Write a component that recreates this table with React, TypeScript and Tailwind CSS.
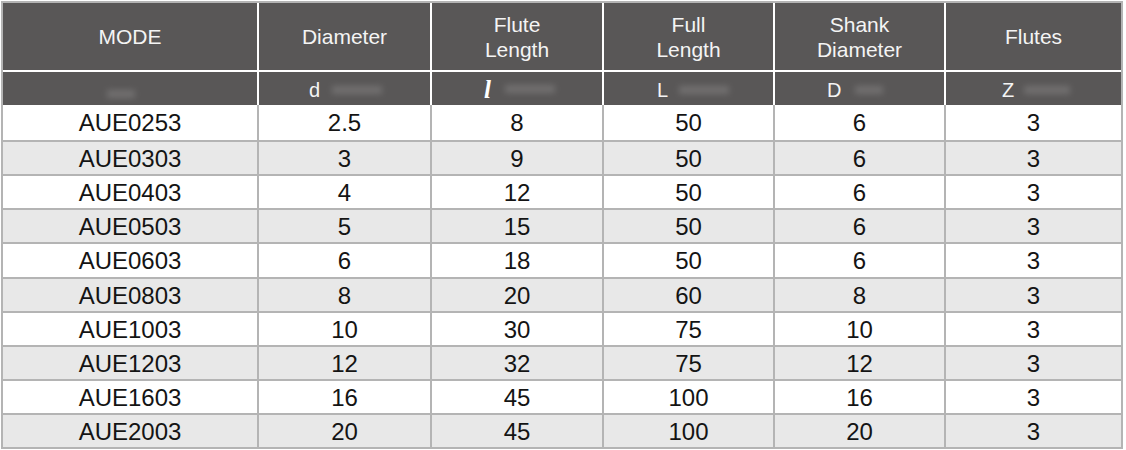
import React from 'react';

const cols = 'grid grid-cols-[254px_171px_170px_169px_169px_175px] gap-[2px]';

const rows: [string, string, string, string, string, string][] = [
    ['AUE0253', '2.5', '8', '50', '6', '3'],
    ['AUE0303', '3', '9', '50', '6', '3'],
    ['AUE0403', '4', '12', '50', '6', '3'],
    ['AUE0503', '5', '15', '50', '6', '3'],
    ['AUE0603', '6', '18', '50', '6', '3'],
    ['AUE0803', '8', '20', '60', '8', '3'],
    ['AUE1003', '10', '30', '75', '10', '3'],
    ['AUE1203', '12', '32', '75', '12', '3'],
    ['AUE1603', '16', '45', '100', '16', '3'],
    ['AUE2003', '20', '45', '100', '20', '3'],
];

// blurred label after each symbol, as in the source image
const Smudge = ({ className }: { className: string }) => (
    <span className={`inline-block h-[8px] bg-[#838181] blur-[3px] opacity-60 ${className}`} />
);

const rowHeight = (i: number) => (i === 0 ? 'h-[35px]' : i === 4 ? 'h-[33px]' : 'h-[32px]');

export default function App() {
    return (
        <div className="w-[1126px] h-[450px] bg-white pt-[1px] pl-[1px]" style={{ fontFamily: '"Liberation Sans", Arial, sans-serif' }}>
            <div className="w-[1122px] border-2 border-[#b4b4b4] bg-white">
                {/* header */}
                <div className={`${cols} h-[67px] mb-[2px]`}>
                    {['MODE', 'Diameter', 'Flute\nLength', 'Full\nLength', 'Shank\nDiameter', 'Flutes'].map((h) => (
                        <div key={h} className="bg-[#595757] flex items-center justify-center text-center text-[21px] leading-[25px] text-[#f4f4f4] whitespace-pre-line">
                            {h}
                        </div>
                    ))}
                </div>
                <div className={`${cols} h-[33px] text-[20px] leading-none text-[#f4f4f4]`}>
                    <div className="bg-[#595757] flex items-end pb-[7px] pl-[104px]">
                        <Smudge className="w-[28px] h-[5px]" />
                    </div>
                    <div className="bg-[#595757] flex items-center pl-[50px] pt-[2px]">
                        d
                        <Smudge className="w-[50px] ml-[12px]" />
                    </div>
                    <div className="bg-[#595757] flex items-center pl-[52px] pt-[1px]">
                        <span className="text-[25px] leading-none font-bold italic text-white" style={{ fontFamily: '"Liberation Serif", serif' }}>l</span>
                        <Smudge className="w-[50px] ml-[14px]" />
                    </div>
                    <div className="bg-[#595757] flex items-center pl-[53px] pt-[2px]">
                        L
                        <Smudge className="w-[50px] ml-[11px]" />
                    </div>
                    <div className="bg-[#595757] flex items-center pl-[52px] pt-[2px]">
                        D
                        <Smudge className="w-[28px] ml-[14px]" />
                    </div>
                    <div className="bg-[#595757] flex items-center pl-[56px] pt-[2px]">
                        Z
                        <Smudge className="w-[46px] ml-[10px]" />
                    </div>
                </div>

                {/* data */}
                <div className="flex flex-col gap-[2px] bg-[#b4b4b4]">
                    {rows.map((r, i) => (
                        <div key={r[0]} className={`${cols} ${rowHeight(i)}`}>
                            {r.map((v, j) => (
                                <div
                                    key={j}
                                    className={`flex items-center justify-center text-[24px] leading-none pt-[1px] text-[#141414] ${i % 2 === 0 ? 'bg-white' : 'bg-[#e8e8e8]'}`}
                                >
                                    {v}
                                </div>
                            ))}
                        </div>
                    ))}
                </div>
            </div>
        </div>
    );
}
